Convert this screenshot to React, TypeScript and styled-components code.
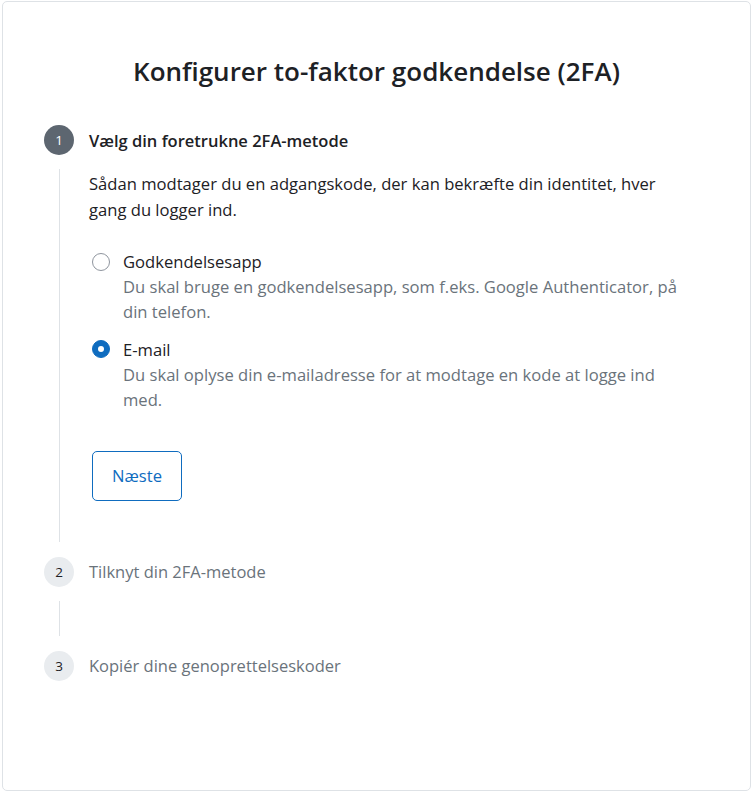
import React from "react";
import styled, { createGlobalStyle } from "styled-components";

const GlobalStyle = createGlobalStyle`
  html, body { margin: 0; padding: 0; background: #fff; }
  body {
    font-family: "Open Sans", "Noto Sans", "Liberation Sans", sans-serif;
    color: #1d2125;
  }
  * { box-sizing: border-box; }
`;

const Card = styled.div`
  margin: 1px 1px 0 2px;
  width: 749px;
  height: 790px;
  border: 1px solid #dee2e6;
  border-radius: 5px;
  padding: 0 41px;
`;

const Title = styled.h2`
  margin: 0;
  padding-top: 51px;
  text-align: center;
  font-size: 26px;
  line-height: 36px;
  font-weight: 600;
  color: #1d2125;
`;

const Stepper = styled.ol`
  list-style: none;
  margin: 36px 0 0 0;
  padding: 0;
`;

const Step = styled.li`
  display: grid;
  grid-template-columns: 30px 1fr;
  column-gap: 15px;
  margin-bottom: 15px;
`;

const Circle = styled.span<{ $active?: boolean }>`
  width: 30px;
  height: 30px;
  border-radius: 50%;
  display: flex;
  align-items: center;
  justify-content: center;
  font-size: 13.5px;
  background: ${(p) => (p.$active ? "#5d6670" : "#e9ecef")};
  color: ${(p) => (p.$active ? "#fff" : "#1d2125")};
`;

const StepLabel = styled.span<{ $active?: boolean }>`
  align-self: center;
  font-size: 16.5px;
  font-weight: ${(p) => (p.$active ? 600 : 400)};
  color: ${(p) => (p.$active ? "#1d2125" : "#6a737b")};
`;

const Connector = styled.span<{ $min?: number }>`
  justify-self: center;
  width: 1px;
  background: #dee2e6;
  margin-top: 14px;
  min-height: ${(p) => p.$min ?? 0}px;
`;

const Body = styled.div`
  margin-top: 14px;
  padding-top: 2px;
  padding-bottom: 41px;
  font-size: 16.6px;
  line-height: 25px;
`;

const Intro = styled.p`
  margin: 0;
  max-width: 590px;
  line-height: 26px;
`;

const Options = styled.div`
  margin-top: 26px;
  display: flex;
  flex-direction: column;
  gap: 12.5px;
`;

const Option = styled.label`
  display: grid;
  grid-template-columns: 18px 1fr;
  column-gap: 13px;
  padding-left: 3px;
  cursor: pointer;
`;

const Radio = styled.span<{ $checked?: boolean }>`
  width: 18px;
  height: 18px;
  margin-top: 3.5px;
  border-radius: 50%;
  border: 1px solid ${(p) => (p.$checked ? "#0f6cbf" : "#8f959e")};
  background: ${(p) => (p.$checked ? "#0f6cbf" : "#fff")};
  display: flex;
  align-items: center;
  justify-content: center;
  &::after {
    content: "";
    width: 6px;
    height: 6px;
    border-radius: 50%;
    background: #fff;
    display: ${(p) => (p.$checked ? "block" : "none")};
  }
`;

const OptionText = styled.div`
  display: flex;
  flex-direction: column;
  max-width: 565px;
`;

const OptionTitle = styled.span`
  color: #1d2125;
`;

const OptionDesc = styled.span`
  color: #6a737b;
`;

const NextButton = styled.button`
  margin: 39px 0 0 3px;
  width: 90px;
  height: 50px;
  border: 1px solid #0f6cbf;
  border-radius: 5px;
  background: #fff;
  color: #0f6cbf;
  font-family: inherit;
  font-size: 16.6px;
  cursor: pointer;
`;

const EmptyBody = styled.div`
  margin-top: 15px;
  min-height: 34px;
`;

export default function App() {
  return (
    <>
      <GlobalStyle />
      <Card>
        <Title>Konfigurer to-faktor godkendelse (2FA)</Title>
        <Stepper>
          <Step>
            <Circle $active>1</Circle>
            <StepLabel $active>Vælg din foretrukne 2FA-metode</StepLabel>
            <Connector />
            <Body>
              <Intro>
                Sådan modtager du en adgangskode, der kan bekræfte din identitet, hver gang du logger ind.
              </Intro>
              <Options>
                <Option>
                  <Radio />
                  <OptionText>
                    <OptionTitle>Godkendelsesapp</OptionTitle>
                    <OptionDesc>
                      Du skal bruge en godkendelsesapp, som f.eks. Google Authenticator, på din telefon.
                    </OptionDesc>
                  </OptionText>
                </Option>
                <Option>
                  <Radio $checked />
                  <OptionText>
                    <OptionTitle>E-mail</OptionTitle>
                    <OptionDesc>
                      Du skal oplyse din e-mailadresse for at modtage en kode at logge ind med.
                    </OptionDesc>
                  </OptionText>
                </Option>
              </Options>
              <NextButton>Næste</NextButton>
            </Body>
          </Step>
          <Step>
            <Circle>2</Circle>
            <StepLabel>Tilknyt din 2FA-metode</StepLabel>
            <Connector $min={30} />
            <EmptyBody />
          </Step>
          <Step>
            <Circle>3</Circle>
            <StepLabel>Kopiér dine genoprettelseskoder</StepLabel>
          </Step>
        </Stepper>
      </Card>
    </>
  );
}
